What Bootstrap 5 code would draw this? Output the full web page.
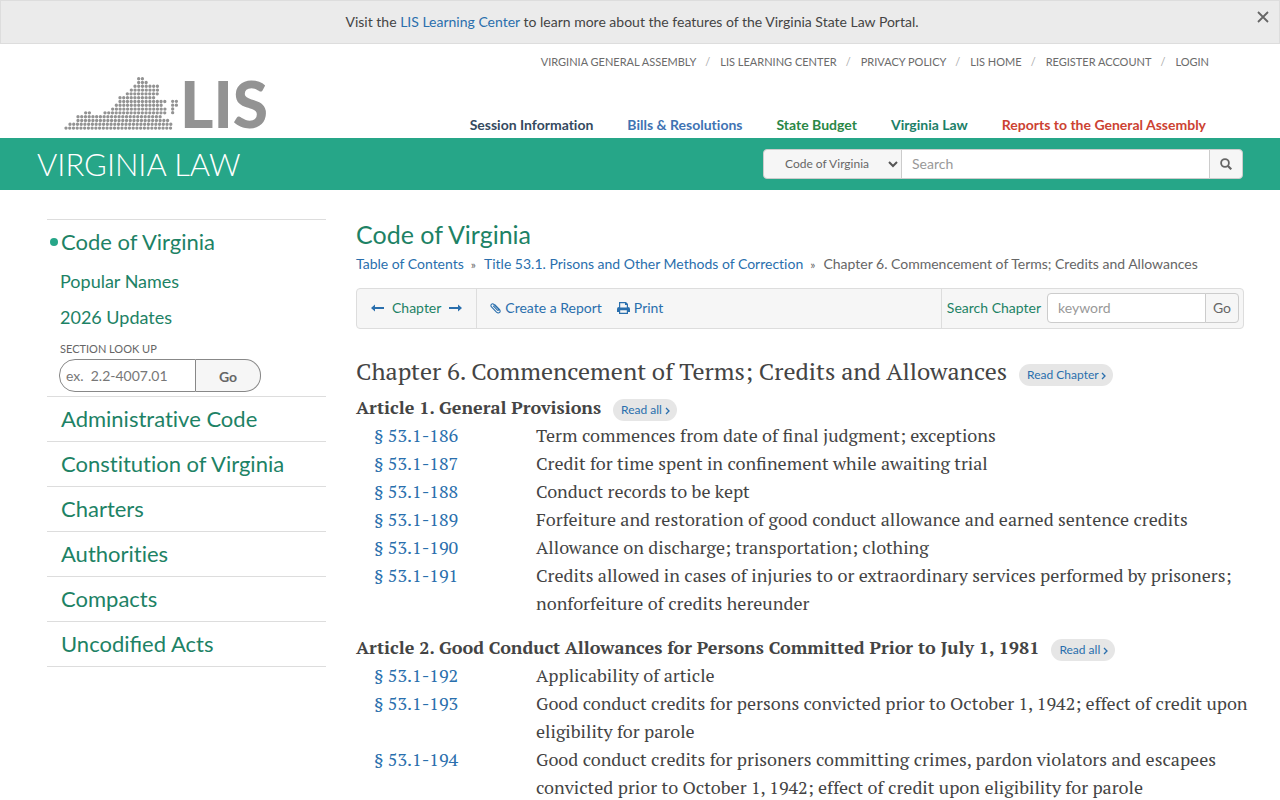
<!DOCTYPE html>
<html lang="en">
<head>
<meta charset="utf-8">
<meta name="viewport" content="width=device-width, initial-scale=1">
<title>Code of Virginia - Chapter 6</title>
<link href="https://cdn.jsdelivr.net/npm/bootstrap@5.3.0/dist/css/bootstrap.min.css" rel="stylesheet">
<style>
body{font-family:Lato,sans-serif;font-size:14px;line-height:20px;color:#444;font-variant-ligatures:none}
a{color:#2a6fad;text-decoration:none}
a:hover{text-decoration:underline}
.green,.side a{color:#1d8265}
.notice{background:#ebebeb;border:1px solid #ddd;height:44px;color:#444}
.notice .dismiss{right:8px;top:8px;width:16px;height:16px;line-height:0}
.masthead{min-height:94px;padding:0 71px 0 64px}
.logo,.logo:hover{color:#939393;margin-top:32px;text-decoration:none}
.logo-word{font:900 64px/56px Lato,sans-serif}
.top-links{font-size:11px;line-height:16px;margin-top:10px}
.top-links a{color:#6b6b6b}
.top-links li+li::before{content:"/";color:#aaa;padding:0 10px 0 9px}
.main-links{gap:34px;font-weight:700;margin:0 3px 3px 0}
.link-session{color:#34495e}
.link-bills{color:#3f73b3}
.link-budget{color:#2a8746}
.link-law{color:#1d8068}
.link-reports{color:#cc4232}
.band{background:#26a688;min-height:52px;padding:0 37px}
.band-title{font-weight:300;font-size:31px;line-height:36px;color:#fff}
.search-group{width:480px;height:30px}
.form-control,.form-select,.search-group .btn,.tools .btn{border:1px solid #ccc;border-radius:4px;font-size:14px;line-height:20px;padding:4px 10px;min-height:0;color:#666}
.form-control::placeholder{color:#999;opacity:1}
.search-group .form-select{flex:0 0 139px;font-size:12px;background-color:#f6f6f6;padding:4px 20px 4px 21px;background-position:right 3px center;background-size:10px 10px;background-image:url("data:image/svg+xml,%3Csvg xmlns='http://www.w3.org/2000/svg' viewBox='0 0 10 10'%3E%3Cpath d='M1 3l4 4 4-4' fill='none' stroke='%23555' stroke-width='2'/%3E%3C/svg%3E")}
.search-group .btn,.tools .btn{background-color:#f6f6f6}
.page{padding:29px 36px 0 47px;gap:30px}
.side{flex:0 0 279px}
.side>li{border-top:1px solid #ddd}
.side>li:last-child{border-bottom:1px solid #ddd}
.side>li>a{display:block;font-size:22px;line-height:44px;padding-left:14px}
.side .sub{font-size:18px;line-height:36px;padding-left:13px;margin-top:-1px}
.current::before{content:"";position:absolute;left:3px;top:18px;width:8px;height:8px;border-radius:50%;background:#26a688}
.lookup{padding:4px 0 4px 12px}
.lookup label{font-size:11px;line-height:20px;padding-left:1px;color:#666}
.lookup .form-control{flex:0 0 137px;height:33px;border-color:#888;border-radius:16px 0 0 16px;padding:4px 6px}
.lookup .form-control::placeholder{color:#777}
.lookup .btn{width:65px;height:33px;border:1px solid #888;border-radius:0 16px 16px 0;background:#f6f6f6;font-size:14px;line-height:20px;font-weight:700;color:#666;padding:6px 0 4px}
.main{flex:1 1 0;min-width:0}
.main h1{font-size:25px;line-height:30px;margin:0}
.crumbs{line-height:20px;padding-top:5px;color:#666}
.crumbs li+li::before{content:"»";font-size:12px;padding:0 8px 0 7px}
.tools{background:#f6f6f6;border:1px solid #ddd;border-radius:4px;margin-top:13px;min-height:41px}
.tools .pager{padding:0 14px;gap:8px;border-right:1px solid #ddd}
.tools .pager,.tools .actions{padding-bottom:2px}
.tools .actions{padding:0 13px 2px;gap:15px}
.tools form{padding:0 4px 2px 5px;gap:6px;border-left:1px solid #ddd}
.tools .input-group{width:192px;height:30px}
.tools .input-group .btn{padding:4px 7px}
.law{font-family:"PT Serif","Liberation Serif",serif;font-size:18px;line-height:28px;font-variant-ligatures:normal}
.law h2{font-size:24px;line-height:32px;margin:26px 0 6px;gap:12px}
.law h3{font-size:18px;line-height:28px;font-weight:700;margin:0;gap:12px}
.law section+section{margin-top:16px}
.read-link{font:400 12px/18px Lato,sans-serif;background:#e6e6e6;border-radius:11px;padding:2px 7px 2px 8px;margin-top:6px;white-space:nowrap}
.law h2 .read-link{margin-top:8px}
.sections{display:grid;grid-template-columns:162px 1fr;padding-left:18px;margin:0 -10px 0 0}
.sections dt{font-weight:400}
.sections dd{margin:0}
.joined{font-variant-ligatures:normal}
@media(max-width:991px){.page,.masthead{flex-direction:column;padding-left:16px;padding-right:16px}.band,.tools{flex-wrap:wrap}.side{flex-basis:auto}.search-group{width:100%}.main-links{flex-wrap:wrap}}
</style>
</head>
<body>
<svg class="d-none"><symbol id="angle" viewBox="0 0 5 8"><path d="M1 1l3 3-3 3" fill="none" stroke="currentColor" stroke-width="1.300"/></symbol></svg>
<div class="notice d-flex align-items-center justify-content-center position-relative">
  <p class="m-0 pe-3">Visit the <a href="#">LIS Learning Center</a> to learn more about the features of the Virginia State Law Portal.</p>
  <button type="button" class="dismiss position-absolute btn p-0 border-0" aria-label="Close"><svg width="12" height="12" viewBox="0 0 12 12" stroke="#666" stroke-width="1.800"><path d="M1 1l10 10M11 1L1 11"/></svg></button>
</div>
<header class="masthead d-flex justify-content-between">
  <a class="logo d-flex align-items-start" href="#" aria-label="Legislative Information System">
    <svg width="116" height="55" viewBox="42 33 348 165" fill="none" stroke="#939393" stroke-width="10" stroke-linecap="round" stroke-dasharray="0 11.2"><path d="M266 41h12M266 52.400h23M255 63.800h68M244 75.200h79M232 86.600h91M210 98h102M210 109.400h136M199 120.800h136M188 132.200h158M107 143.600h12M165 143.600h181M84 155h251M84 166.400h274M60 177.800h309M48 189.200h320M368 109h12M368 120.500h12M368 132h1M368 143h1"/></svg>
    <span class="logo-word">LIS</span>
  </a>
  <div class="d-flex flex-column justify-content-between align-items-end">
    <ul class="top-links list-unstyled d-flex mb-0">
      <li><a href="#">VIRGINIA GENERAL ASSEMBLY</a></li><li><a href="#">LIS LEARNING CENTER</a></li><li><a href="#">PRIVACY POLICY</a></li><li><a href="#">LIS HOME</a></li><li><a href="#">REGISTER ACCOUNT</a></li><li><a href="#">LOGIN</a></li>
    </ul>
    <nav class="main-links d-flex">
      <a href="#" class="link-session">Session Information</a><a href="#" class="link-bills">Bills &amp; Resolutions</a><a href="#" class="link-budget">State Budget</a><a href="#" class="link-law">Virginia Law</a><a href="#" class="link-reports">Reports to the General Assembly</a>
    </nav>
  </div>
</header>
<div class="band d-flex align-items-center justify-content-between">
  <div class="band-title">VIRGINIA LAW</div>
  <form class="search-group input-group flex-nowrap">
    <select class="form-select" aria-label="Search in"><option>Code of Virginia</option></select>
    <input class="form-control" type="text" placeholder="Search" aria-label="Search">
    <button class="btn d-flex align-items-center" type="button" aria-label="Run search"><svg width="12" height="12" viewBox="0 0 12 12" fill="none" stroke="#666" stroke-width="1.800"><circle cx="5" cy="5" r="3.900"/><path d="M8 8l3.300 3.300" stroke-width="2.200"/></svg></button>
  </form>
</div>
<div class="page d-flex">
  <ul class="side list-unstyled mb-0">
    <li><a class="current position-relative" href="#">Code of Virginia</a>
      <div class="sub"><a class="d-block" href="#">Popular Names</a><a class="d-block" href="#">2026 Updates</a></div>
      <form class="lookup"><label class="d-block" for="section">SECTION LOOK UP</label>
        <div class="d-flex"><input class="form-control" id="section" type="text" placeholder="ex.&nbsp; 2.2-4007.01"><button class="btn border-start-0" type="button">Go</button></div>
      </form></li>
    <li><a href="#">Administrative Code</a></li>
    <li><a href="#">Constitution of Virginia</a></li>
    <li><a href="#">Charters</a></li>
    <li><a href="#">Authorities</a></li>
    <li><a href="#">Compacts</a></li>
    <li><a class="joined" href="#">Uncodified Acts</a></li>
  </ul>
  <main class="main">
    <h1 class="green fw-normal">Code of Virginia</h1>
    <ol class="crumbs list-unstyled d-flex flex-wrap mb-0"><li><a href="#">Table of Contents</a></li><li><a href="#">Title 53.1. Prisons and Other Methods of Correction</a></li><li>Chapter 6. Commencement of Terms; Credits and Allowances</li></ol>
    <div class="tools d-flex">
      <div class="pager d-flex align-items-center">
        <a href="#" aria-label="Previous chapter" class="d-flex"><svg width="13" height="8" viewBox="0 0 13 8" fill="currentColor"><path d="M0 4l4-3.500V3h9v2H4v2.500z"/></svg></a>
        <span class="green">Chapter</span>
        <a href="#" aria-label="Next chapter" class="d-flex"><svg width="13" height="8" viewBox="0 0 13 8" fill="currentColor"><path d="M13 4L9 .500V3H0v2h9v2.500z"/></svg></a>
      </div>
      <div class="actions d-flex align-items-center flex-grow-1">
        <a href="#" class="d-flex align-items-center"><svg class="me-1" width="11" height="12" viewBox="0 0 11 12" fill="none" stroke="currentColor" stroke-width="1.100" stroke-linecap="round"><path d="M3.500 4.200l3.700 3.700c1 1 2-.1 1.200-1L4 2.500C2.200.700-.300 3 1.500 4.900l5 5.200c2.300 2.200 5-.400 2.900-2.600L5 2.900"/></svg>Create a Report</a>
        <a href="#" class="d-flex align-items-center"><svg width="13" height="12" viewBox="0 0 13 12" fill="currentColor" fill-rule="evenodd"><path d="M2 0h7l2 2v3a2 2 0 0 1 2 2v3h-2v2H2v-2H0V7a2 2 0 0 1 2-2zM3.200 1.200v4.300h6.600V3H8V1.200zM3.200 8.200v2.600h6.600V8.200z"/></svg><span class="ps-1">Print</span></a>
      </div>
      <form class="d-flex align-items-center"><label class="green" for="kw">Search Chapter</label>
        <div class="input-group flex-nowrap"><input class="form-control" id="kw" type="text" placeholder="keyword"><button class="btn" type="button">Go</button></div></form>
    </div>
    <div class="law">
      <h2 class="d-flex align-items-center fw-normal">Chapter 6. Commencement of Terms; Credits and Allowances <a class="read-link" href="#">Read Chapter <svg width="5" height="8"><use href="#angle"/></svg></a></h2>
      <section>
        <h3 class="d-flex align-items-center">Article 1. General Provisions <a class="read-link" href="#">Read all <svg width="5" height="8"><use href="#angle"/></svg></a></h3>
        <dl class="sections">
          <dt><a href="#">§ 53.1-186</a></dt><dd>Term commences from date of final judgment; exceptions</dd>
          <dt><a href="#">§ 53.1-187</a></dt><dd>Credit for time spent in confinement while awaiting trial</dd>
          <dt><a href="#">§ 53.1-188</a></dt><dd>Conduct records to be kept</dd>
          <dt><a href="#">§ 53.1-189</a></dt><dd>Forfeiture and restoration of good conduct allowance and earned sentence credits</dd>
          <dt><a href="#">§ 53.1-190</a></dt><dd>Allowance on discharge; transportation; clothing</dd>
          <dt><a href="#">§ 53.1-191</a></dt><dd>Credits allowed in cases of injuries to or extraordinary services performed by prisoners; nonforfeiture of credits hereunder</dd>
        </dl>
      </section>
      <section>
        <h3 class="d-flex align-items-center">Article 2. Good Conduct Allowances for Persons Committed Prior to July 1, 1981 <a class="read-link" href="#">Read all <svg width="5" height="8"><use href="#angle"/></svg></a></h3>
        <dl class="sections">
          <dt><a href="#">§ 53.1-192</a></dt><dd>Applicability of article</dd>
          <dt><a href="#">§ 53.1-193</a></dt><dd>Good conduct credits for persons convicted prior to October 1, 1942; effect of credit upon eligibility for parole</dd>
          <dt><a href="#">§ 53.1-194</a></dt><dd>Good conduct credits for prisoners committing crimes, pardon violators and escapees convicted prior to October 1, 1942; effect of credit upon eligibility for parole</dd>
        </dl>
      </section>
    </div>
  </main>
</div>
<script src="https://cdn.jsdelivr.net/npm/bootstrap@5.3.0/dist/js/bootstrap.bundle.min.js"></script>
</body>
</html>
